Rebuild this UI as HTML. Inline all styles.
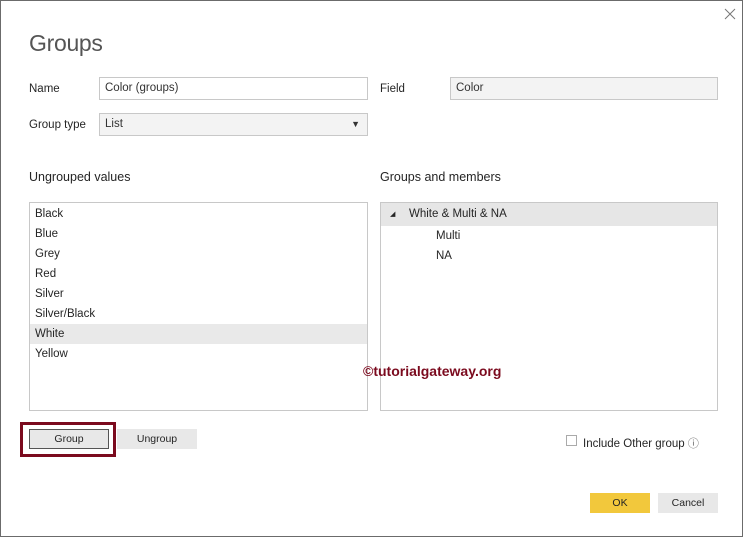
<!DOCTYPE html>
<html><head><meta charset="utf-8"><style>
*{box-sizing:border-box;margin:0;padding:0}
body{width:743px;height:538px;background:#fff;font-family:"Liberation Sans",sans-serif;font-size:11.5px;color:#252525;position:relative;overflow:hidden}
.frame{position:absolute;left:0;top:0;width:743px;height:537px;border:1px solid #6b6b6b}
.a{position:absolute}
.inp{position:absolute;border:1px solid #c8c8c8;height:23px;line-height:21px;padding-left:5px;color:#333}
.list{position:absolute;border:1px solid #c8c8c8;background:#fff}
.row{height:20px;line-height:20px;padding-left:5px}
.btn{position:absolute;text-align:center;font-size:10.5px;line-height:20px;height:20px}
</style></head><body>
<div class="frame"></div>
<svg class="a" style="left:724px;top:8px" width="12" height="12"><path d="M1 1L11 11M11 1L1 11" stroke="#777" stroke-width="1"/></svg>
<div class="a" style="left:29px;top:30px;font-size:23px;color:#555;font-weight:normal;letter-spacing:-0.3px">Groups</div>
<div class="a" style="left:29px;top:83px">Name</div>
<div class="inp" style="left:99px;top:77px;width:269px">Color (groups)</div>
<div class="a" style="left:380px;top:83px">Field</div>
<div class="inp" style="left:450px;top:77px;width:268px;background:#f3f3f3">Color</div>
<div class="a" style="left:29px;top:119px">Group type</div>
<div class="inp" style="left:99px;top:113px;width:269px;background:#f3f3f3">List<span style="position:absolute;right:7px;top:0;font-size:9px">▼</span></div>
<div class="a" style="left:29px;top:170px;font-size:12.5px">Ungrouped values</div>
<div class="a" style="left:380px;top:170px;font-size:12.5px">Groups and members</div>
<div class="list" style="left:29px;top:202px;width:339px;height:209px;padding-top:1px">
<div class="row">Black</div><div class="row">Blue</div><div class="row">Grey</div><div class="row">Red</div><div class="row">Silver</div><div class="row">Silver/Black</div><div class="row" style="background:#e9e9e9">White</div><div class="row">Yellow</div>
</div>
<div class="list" style="left:380px;top:202px;width:338px;height:209px">
<div style="height:23px;line-height:23px;background:#e6e6e6;padding-left:28px;position:relative"><span style="position:absolute;left:9px;top:0;font-size:7px">◢</span>White &amp; Multi &amp; NA</div>
<div class="row" style="padding-left:55px">Multi</div><div class="row" style="padding-left:55px">NA</div>
</div>
<div class="a" style="left:363px;top:363px;font-size:14px;font-weight:bold;color:#7b0a1e">©tutorialgateway.org</div>
<div class="a" style="left:20px;top:422px;width:96px;height:35px;border:3px solid #7b0a1e"></div>
<div class="btn" style="left:29px;top:429px;width:80px;background:#e8e8e8;border:1px solid #555;line-height:18px">Group</div>
<div class="btn" style="left:117px;top:429px;width:80px;background:#e8e8e8">Ungroup</div>
<div class="a" style="left:566px;top:435px;width:11px;height:11px;border:1px solid #aaa"></div>
<div class="a" style="left:583px;top:435px">Include Other group <span style="font-size:11px;color:#666">ⓘ</span></div>
<div class="btn" style="left:590px;top:493px;width:60px;background:#f2c83c">OK</div>
<div class="btn" style="left:658px;top:493px;width:60px;background:#e8e8e8">Cancel</div>
</body></html>
